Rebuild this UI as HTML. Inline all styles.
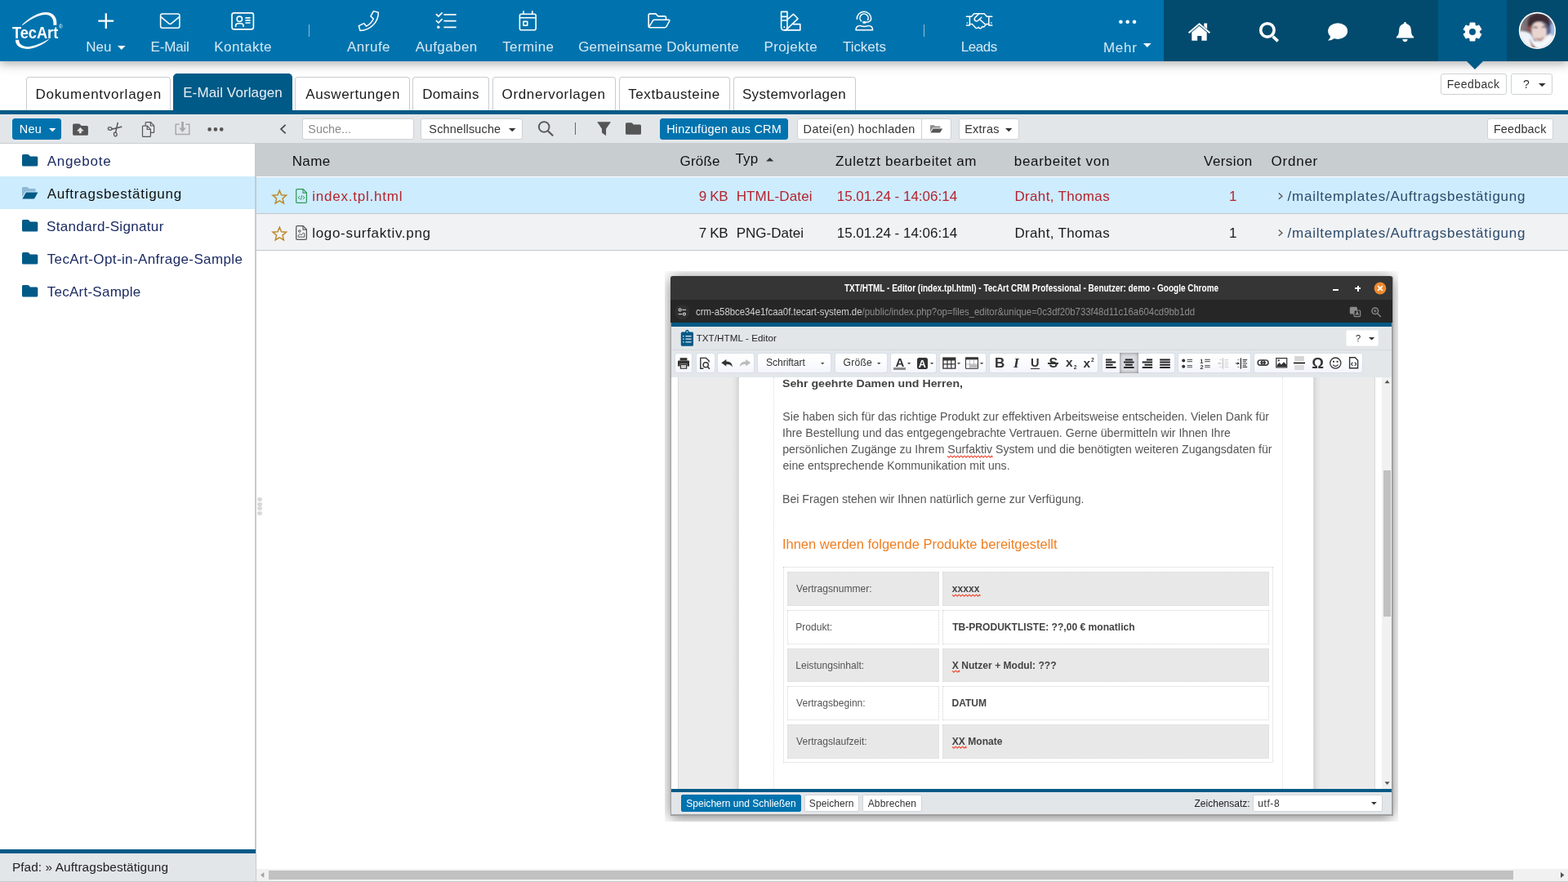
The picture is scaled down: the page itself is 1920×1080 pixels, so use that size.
<!DOCTYPE html>
<html lang="de">
<head>
<meta charset="utf-8">
<title>TecArt CRM - E-Mail Vorlagen</title>
<style>

html,body{margin:0;padding:0}
body{width:1920px;height:1080px;position:relative;overflow:hidden;background:#fff;font-family:"Liberation Sans",sans-serif;color:#222}
div,span,svg,a,b,i,u,h1,h2,h3,p,label,nav,header,section,aside,footer,main{position:absolute;display:block;box-sizing:border-box;margin:0;padding:0}
#app{position:absolute;left:0;top:0;width:1920px;height:1080px;will-change:transform}
.t{white-space:pre;line-height:1;transform-origin:0 50%}
button{border:0;background:none;font:inherit}
.i{overflow:visible}
.nav{left:0;top:0;width:1920px;height:75px;background:#0073ae;box-shadow:0 1px 13px 1px rgba(0,0,0,.37)}
.navr{left:1425px;top:0;width:495px;height:75px;background:#024b6e}
.nava{left:1761px;top:0;width:84px;height:75px;background:#005a87}
.navarrow{left:1795.5px;top:75px;width:0;height:0;border-left:10px solid transparent;border-right:10px solid transparent;border-top:10px solid #005a87}
.sep{background:rgba(255,255,255,.55);width:1px;height:15px;top:30px}
.tab{top:94px;height:42px;background:#fff;border:1px solid #c9cdd0;border-bottom:0;border-radius:4px 4px 0 0}
.tab.on{top:90px;height:46px;background:#005a87;border-color:#005a87;border-radius:5px 5px 0 0}
.tabline{left:0;top:135px;width:1920px;height:5px;background:#005a87}
.bar{left:0;top:140px;width:1920px;height:36px;background:#e2e6e9;border-bottom:1px solid #c9cdd0}
.btn{background:#fff;border:1px solid #ced2d5;border-radius:3px}
.btn.pri{background:#0073ae;border-color:#0073ae}
.tree{left:0;top:176px;width:312px;height:864px;background:#fff}
.trow{left:0;width:312px;height:40px}
.trow.on{background:#cdecfd}
.split{left:312px;top:176px;width:2px;height:904px;background:#c5cacd}
.thead{left:314px;top:176px;width:1606px;height:40px;background:#c8cdd0}
.r1{left:314px;top:217px;width:1606px;height:44px;background:#cdecfd;border-bottom:0}
.rl{left:314px;width:1606px;height:1px;background:#c3c7ca}
.r2{left:314px;top:262px;width:1606px;height:44px;background:#f1f2f4}
.path{left:0;top:1040px;width:313px;height:40px;background:#e2e6e9;border-top:5px solid #005a87}
.bl{left:0;top:1078.6px;width:1920px;height:1.4px;background:#c5cacd}
.hs{left:314px;top:1064.4px;width:1606px;height:14.4px;background:#f1f1f1}
.hst{left:329px;top:1066.2px;width:1523.8px;height:10.6px;background:#c1c1c1}

.ed{left:0;top:0;width:1920px;height:1080px}
.wclip{left:813.7px;top:332px;width:898.3px;height:674px;overflow:hidden}
.wsh{left:7.3px;top:6px;width:884.5px;height:661px;border-radius:3px 3px 0 0;box-shadow:0 2px 17px rgba(0,0,0,.52)}
.win{left:821px;top:338px;width:884.5px;height:661px;background:#a0a0a0;border-radius:3px 3px 0 0}
.wc{left:822.1px;top:395px;width:881.7px;height:602.3px;background:#fff}
.wt{left:821px;top:338px;width:883.9px;height:29px;background:#353535;border-radius:3px 3px 0 0}
.wu{left:821px;top:367px;width:883.9px;height:28.4px;background:#262626}
.wl{left:822.1px;width:881.7px;background:#005a87}
.wh{left:822.1px;top:400.2px;width:881.7px;height:28.6px;background:#e2e6e9;border-bottom:1px solid #d6dadd}
.wb{left:822.1px;top:428.8px;width:881.7px;height:33px;background:#e3e7ea}
.wf{left:822.1px;top:969.8px;width:881.7px;height:27.5px;background:#e2e6e9}
.g{top:432px;height:25px;border:1px solid #d9dfea;border-radius:3px;background:linear-gradient(#fff,#fdfdff 40%,#f3f6fc)}
.ga{left:1371px;top:432px;width:23px;height:25px;background:#d9dce1;box-shadow:inset 0 0 4px rgba(0,0,0,.45)}
.gl{left:830.3px;top:461.8px;width:75.1px;height:504px;background:linear-gradient(90deg,#ebebeb,#ebebeb 88%,#e4e4e4 95%,#d4d4d4);border-left:1px dotted #dadada;border-right:1px dotted #d2d2d2}
.gr{left:1608.4px;top:461.8px;width:75.6px;height:504px;background:linear-gradient(270deg,#ebebeb,#ebebeb 88%,#e4e4e4 95%,#d4d4d4);border-left:1px dotted #d2d2d2;border-right:1px dotted #dadada}
.dv{top:461.8px;width:0;height:504px;border-left:1px dotted #dcdcdc}
.sb{left:1692.4px;top:461.8px;width:11.4px;height:504px;background:#f1f1f1}
.st{left:1694.2px;top:576.2px;width:8.8px;height:178.8px;background:#c1c1c1}
.tb{left:958.8px;top:694.4px;width:600.2px;height:239.4px;border:1px dotted #d2d2d2}
.c{height:41.8px;border:1px dotted #d4d4d4}
.c.s{background:#e8e8e8;border-color:#dcdcdc}
.fb{top:973.4px;height:20.6px;background:#fff;border:1px solid #d2d6d9;border-radius:2px}
.fb.pri{background:#0073ae;border-color:#0073ae}

</style>
</head>
<body>
<main id="app">
<header class="nav">
<div class="navr"></div><div class="nava"></div>
<svg class="i" style="left:12px;top:10px" width="68" height="54" viewBox="12 10 68 54"><path fill="#fff" d="M26.9 30.6C34.5 22.5 47 15.2 56 15.1C64.5 15 70.3 20.6 69.3 30.8L65.4 30.8C66.3 22.6 62.3 17.8 55.4 17.9C47.6 18 36.5 23.6 27.6 31.1Z"/><path fill="#fff" d="M60 48.2C52.6 55 41.5 60 33 59.9C24.6 59.8 18.6 55.6 19 48.8L23.2 48.8C23 53.9 27.4 57.2 33.8 57.2C41.4 57.1 51 53 59.7 47.8Z"/><text x="72.1" y="35.2" font-family="Liberation Sans, sans-serif" font-size="6.4" fill="#fff" opacity=".92">®</text><text x="15" y="46.6" font-family="Liberation Sans, sans-serif" font-weight="700" font-size="20.6" fill="#fff" textLength="56.2" lengthAdjust="spacingAndGlyphs">TecArt</text></svg>
<a class="t" style="left:105.16px;top:49px;font-size:17px;color:rgba(255,255,255,.84);letter-spacing:0.104px">Neu</a>
<svg class="i" style="left:118px;top:14px" width="24" height="24" viewBox="118 14 24 24"><path d="M120.3 25.6H139.1M129.8 16.2V35" stroke="#fff" stroke-width="2.3" fill="none"/></svg>
<a class="t" style="left:184.61px;top:49px;font-size:17px;color:rgba(255,255,255,.84);letter-spacing:-0.189px">E-Mail</a>
<svg class="i" style="left:194px;top:14px" width="29" height="24" viewBox="194 14 29 24"><g fill="none" stroke="#fff" stroke-linecap="round" stroke-linejoin="round" stroke-width="1.55"><rect x="196.6" y="16.9" width="23.3" height="17.4" rx="2.2"/><path d="M197 20.6L206.9 28.9Q208.3 30 209.7 28.9L219.6 20.6"/></g></svg>
<a class="t" style="left:262.16px;top:49px;font-size:17px;color:rgba(255,255,255,.84);letter-spacing:0.469px">Kontakte</a>
<svg class="i" style="left:281px;top:13px" width="33" height="26" viewBox="281 13 33 26"><g fill="none" stroke="#fff" stroke-linecap="round" stroke-linejoin="round" stroke-width="1.65"><rect x="284" y="15.8" width="26.4" height="20.1" rx="2.6"/><circle cx="293.3" cy="23.3" r="3.2" stroke-width="1.6"/><path d="M288.6 32.4V31.6Q288.6 28.7 291.5 28.7H295.1Q298 28.7 298 31.6V32.4" stroke-width="1.6"/><path d="M300.4 21.9H306.6M300.4 24.9H306.6M300.4 28H306.6" stroke-width="1.6" stroke-linecap="butt"/></g></svg>
<a class="t" style="left:425px;top:49px;font-size:17px;color:rgba(255,255,255,.84);letter-spacing:0.497px">Anrufe</a>
<svg class="i" style="left:437px;top:11px" width="29" height="29" viewBox="437 11 29 29"><path fill="none" stroke="#fff" stroke-linecap="round" stroke-linejoin="round" stroke-width="1.5" d="M457.4 13.6L463.3 15.2C463.4 27.2 453.2 37.3 441 37.5L439.3 31.7L445.6 28.6L448.5 32.1C452.5 30 455.6 26.9 457.3 23L453.9 19.9Z"/></svg>
<a class="t" style="left:508.63px;top:49px;font-size:17px;color:rgba(255,255,255,.84);letter-spacing:0.407px">Aufgaben</a>
<svg class="i" style="left:532px;top:13px" width="29" height="24" viewBox="532 13 29 24"><g fill="none" stroke="#fff" stroke-linecap="round" stroke-linejoin="round" stroke-width="1.7"><path d="M534.4 17.6L536.9 20.1L541.1 15.8M534.4 25.5L536.9 28L541.1 23.7"/><path d="M543.4 17.8H558.6M543.4 25.7H558.6M543.4 33.3H558.6" stroke-linecap="butt"/></g><circle cx="536.8" cy="33.3" r="1.7" fill="#fff"/></svg>
<a class="t" style="left:615.22px;top:49px;font-size:17px;color:rgba(255,255,255,.84);letter-spacing:0.395px">Termine</a>
<svg class="i" style="left:633px;top:11px" width="27" height="29" viewBox="633 11 27 29"><g fill="none" stroke="#fff" stroke-linecap="round" stroke-linejoin="round" stroke-width="1.6"><rect x="636.4" y="17.2" width="19.8" height="19.6" rx="2"/><path d="M641 13.2V17M651.8 13.2V17M636.6 21.8H656" stroke-linecap="butt"/><rect x="640.9" y="26.4" width="4.9" height="4.7" rx=".4"/></g></svg>
<a class="t" style="left:708.14px;top:49px;font-size:17px;color:rgba(255,255,255,.84);letter-spacing:0.206px">Gemeinsame Dokumente</a>
<svg class="i" style="left:791px;top:15px" width="32" height="22" viewBox="791 15 32 22"><path fill="none" stroke="#fff" stroke-linecap="round" stroke-linejoin="round" stroke-width="1.6" d="M815.5 24.3V21.6Q815.5 19.9 813.8 19.9H805.9L802.9 16.9H795.9Q794.2 16.9 794.2 18.6V32M794.6 33.2L799.4 25.4Q800.1 24.3 801.4 24.3H818.6Q820.5 24.3 819.6 26L816 32.6Q815.3 33.7 814 33.7H796Q794.2 33.7 794.2 32"/></svg>
<a class="t" style="left:935.41px;top:49px;font-size:17px;color:rgba(255,255,255,.84);letter-spacing:0.407px">Projekte</a>
<svg class="i" style="left:945px;top:11px" width="38" height="29" viewBox="945 11 38 29"><g fill="none" stroke="#fff" stroke-linecap="round" stroke-linejoin="round" stroke-width="1.6"><path d="M956.6 14.4H964V33.2Q964 37 960.3 37Q956.6 37 956.6 33.2Z"/><path d="M956.8 20.4H963.8M956.8 25H963.8" stroke-linecap="butt"/><path d="M964.4 23.6L971.5 17.3L977 22.8L962.6 36.6"/><path d="M971.2 29.6H979.8V36.9H960.6"/></g><circle cx="960.4" cy="33.3" r="1" fill="#fff"/></svg>
<a class="t" style="left:1031.96px;top:49px;font-size:17px;color:rgba(255,255,255,.84);letter-spacing:-0.038px">Tickets</a>
<svg class="i" style="left:1045px;top:11px" width="27" height="29" viewBox="1045 11 27 29"><g fill="none" stroke="#fff" stroke-linecap="round" stroke-linejoin="round" stroke-width="1.5"><path d="M1049.3 23.2A8.7 8.7 0 1 1 1066.7 22.8Q1066.6 27.2 1060.4 27.2"/><path d="M1054.6 25.8A5.1 5.1 0 1 1 1062.6 24.4"/><path d="M1048 36.8Q1048 31.4 1053.2 31.4Q1056 32.6 1058.3 32.6Q1060.6 32.6 1063.4 31.4Q1068.6 31.4 1068.6 36.8Z"/></g><rect x="1056.2" y="26" width="4.4" height="2.7" rx="1.3" fill="#fff"/></svg>
<a class="t" style="left:1176.65px;top:49px;font-size:17px;color:rgba(255,255,255,.84);letter-spacing:-0.438px">Leads</a>
<svg class="i" style="left:1181px;top:14px" width="36" height="23" viewBox="1181 14 36 23"><g fill="none" stroke="#fff" stroke-linecap="round" stroke-linejoin="round" stroke-width="1.5" stroke-linecap="butt"><path d="M1183.4 20.2H1189.6L1192.7 16.8H1205.2L1208.4 20.2H1214.8"/><path d="M1187.4 20.2V31M1210.8 20.2V31M1183.4 31H1187.4M1210.8 31H1214.8"/><path d="M1187.6 29.6H1190.4L1194.6 34.1Q1196.2 35.2 1197.6 33.8L1198.2 33.2L1199.4 34.6Q1200.8 35.2 1201.8 34L1203 32.4L1204.4 33Q1205.8 32.6 1206.4 31L1207.6 29.4H1210.6"/><path d="M1198.4 17.2L1193.8 21.6Q1192.4 23.4 1194 25.2Q1195.8 26.6 1197.6 25.2L1201.8 21.2M1200.2 24.2L1206.4 29.8"/></g><rect x="1183.6" y="27.2" width="1.5" height="1.6" fill="#fff" opacity=".85"/><rect x="1213.1" y="27.2" width="1.5" height="1.6" fill="#fff" opacity=".85"/></svg>
<a class="t" style="left:1350.9px;top:50px;font-size:17px;color:rgba(255,255,255,.84);letter-spacing:0.741px">Mehr</a>
<svg class="i" style="left:1368px;top:23px" width="26" height="8" viewBox="1368 23 26 8"><circle cx="1372.4" cy="26.7" r="2.3" fill="#fff"/><circle cx="1380.7" cy="26.7" r="2.3" fill="#fff"/><circle cx="1389" cy="26.7" r="2.3" fill="#fff"/></svg>
<div class="sep" style="left:378px"></div><div class="sep" style="left:1130.5px"></div>
<svg class="i" style="left:144.2px;top:55.6px" width="9.6" height="5" viewBox="0 0 10 5"><path d="M0 0H10L5 5Z" fill="#fff"/></svg>
<svg class="i" style="left:1400.2px;top:53.3px" width="9.6" height="5" viewBox="0 0 10 5"><path d="M0 0H10L5 5Z" fill="#fff"/></svg>
<svg class="i" style="left:1453px;top:26px" width="32" height="26" viewBox="1453 26 32 26"><path fill="#fff" d="M1468.5 31.7L1459.3 39.6V49.8H1466.2V44H1471.4V49.8H1477.7V39.6Z"/><path fill="none" stroke="#fff" stroke-width="2.1" d="M1455.6 40.2L1468.5 29.3L1481.4 40.2"/><path fill="#fff" d="M1474.3 28.6H1478.1V35.4L1474.3 32.2Z"/></svg>
<svg class="i" style="left:1540px;top:25px" width="28" height="28" viewBox="1540 25 28 28"><circle cx="1551.9" cy="36.9" r="8.2" fill="none" stroke="#fff" stroke-width="3.6"/><path d="M1558.6 44.6L1564.8 50.4" stroke="#fff" stroke-width="3.6" fill="none"/></svg>
<svg class="i" style="left:1624px;top:27px" width="28" height="25" viewBox="1624 27 28 25"><ellipse cx="1638.1" cy="38.1" rx="12" ry="9.9" fill="#fff"/><path fill="#fff" d="M1629.4 43.6Q1629 47.4 1626 49.8Q1630.6 49.7 1634.4 46.8Z"/></svg>
<svg class="i" style="left:1708px;top:25px" width="25" height="28" viewBox="1708 25 25 28"><path fill="#fff" d="M1720.5 26.9Q1722.2 26.9 1722.2 28.9Q1728 30.6 1728 37.4Q1728 42.4 1730.6 44.6Q1731.6 45.6 1731.1 46.6H1709.9Q1709.4 45.6 1710.4 44.6Q1713 42.4 1713 37.4Q1713 30.6 1718.8 28.9Q1718.8 26.9 1720.5 26.9Z"/><path fill="#fff" d="M1717.4 48.1H1723.6Q1723.4 51.2 1720.5 51.2Q1717.6 51.2 1717.4 48.1Z"/></svg>
<svg class="i" style="left:1789px;top:25px" width="28" height="28" viewBox="1789 25 28 28"><path fill="#fff" stroke="#fff" stroke-width="1.5" stroke-linejoin="round" d="M1800.0 31.3L1800.3 28.3L1805.7 28.3L1806.0 31.3L1808.2 32.5L1810.9 31.3L1813.6 36.0L1811.2 37.7L1811.2 40.3L1813.6 42.0L1810.9 46.7L1808.2 45.5L1806.0 46.7L1805.7 49.7L1800.3 49.7L1800.0 46.7L1797.8 45.5L1795.1 46.7L1792.4 42.0L1794.8 40.3L1794.8 37.7L1792.4 36.0L1795.1 31.3L1797.8 32.5Z"/><circle cx="1803.0" cy="39.0" r="4" fill="#005a87"/></svg>
<svg class="i" style="left:1859px;top:14px" width="47" height="47" viewBox="1859 14 47 47"><defs><clipPath id="av"><circle cx="1882.4" cy="37.4" r="20.9"/></clipPath><filter id="avf" x="-20%" y="-20%" width="140%" height="140%"><feGaussianBlur stdDeviation="1.1"/></filter><linearGradient id="avb" x1="0" y1="0" x2="1" y2="0"><stop offset="0" stop-color="#8b8b90"/><stop offset=".35" stop-color="#6a5a62"/><stop offset=".75" stop-color="#5c5f86"/><stop offset="1" stop-color="#8fb0dc"/></linearGradient></defs><circle cx="1882.4" cy="37.4" r="22.6" fill="#fff"/><g clip-path="url(#av)"><rect x="1858" y="13" width="50" height="50" fill="url(#avb)"/><g filter="url(#avf)"><path d="M1856 39Q1866 36 1874 41L1886 62H1856Z" fill="#eef4fb"/><path d="M1908 40Q1899 39 1892 45L1880 62H1908Z" fill="#f3f6fb"/><ellipse cx="1884" cy="58" rx="16" ry="8" fill="#f4f7fb"/><path d="M1899 30L1906 28V42L1899 44Z" fill="#9dbbe4"/><ellipse cx="1884.6" cy="38.6" rx="9.4" ry="12.4" fill="#ead6d0" transform="rotate(-8 1884.6 38.6)"/><path d="M1871.5 34Q1868.5 20 1881 17Q1895 15 1897.5 27Q1898 31 1896.5 34Q1894 26 1887 26.5Q1879 26 1875.5 31Z" fill="#3b2a30"/><path d="M1871.6 31Q1870 36 1873 40L1874.4 33Z" fill="#c0392b" opacity=".7"/><path d="M1877.4 34.2Q1880 32.4 1882.6 34.4M1888 33.6Q1890.6 32 1893 33.6" stroke="#5a4048" stroke-width="1.5" fill="none"/><path d="M1880.6 45.4Q1885 49.6 1890.6 44.6Q1889 50.4 1884.6 50.6Q1881.6 49.6 1880.6 45.4Z" fill="#b58b88"/><path d="M1873.4 47Q1876 57 1884 60L1879 61Q1873.6 55 1873.4 47Z" fill="#7a2c24"/></g></g></svg>
</header>
<div class="navarrow"></div>
<nav>
<div class="tab" style="left:32px;width:177px"></div>
<a class="t" style="left:43.43px;top:107px;font-size:17px;color:#1b1b1b;letter-spacing:0.736px">Dokumentvorlagen</a>
<div class="tab on" style="left:212px;width:146px"></div>
<a class="t" style="left:224.16px;top:105px;font-size:17px;color:rgba(255,255,255,.9);letter-spacing:0.116px">E-Mail Vorlagen</a>
<div class="tab" style="left:361px;width:141px"></div>
<a class="t" style="left:374.28px;top:107px;font-size:17px;color:#1b1b1b;letter-spacing:0.581px">Auswertungen</a>
<div class="tab" style="left:505px;width:94px"></div>
<a class="t" style="left:517.16px;top:107px;font-size:17px;color:#1b1b1b;letter-spacing:0.368px">Domains</a>
<div class="tab" style="left:602.5px;width:151.5px"></div>
<a class="t" style="left:614.52px;top:107px;font-size:17px;color:#1b1b1b;letter-spacing:0.649px">Ordnervorlagen</a>
<div class="tab" style="left:757.5px;width:136.5px"></div>
<a class="t" style="left:769.23px;top:107px;font-size:17px;color:#1b1b1b;letter-spacing:0.599px">Textbausteine</a>
<div class="tab" style="left:897.5px;width:150.5px"></div>
<a class="t" style="left:908.88px;top:107px;font-size:17px;color:#1b1b1b;letter-spacing:0.379px">Systemvorlagen</a>
</nav>
<div class="btn" style="left:1763.5px;top:90.4px;width:81.2px;height:25.4px;"></div>
<a class="t" style="left:1771.66px;top:96px;font-size:14px;color:#333;letter-spacing:0.405px">Feedback</a>
<div class="btn" style="left:1849.5px;top:90.4px;width:51.2px;height:25.4px;"></div>
<span class="t" style="left:1864.91px;top:96px;font-size:14px;color:#333">?</span>
<svg class="i" style="left:1884.2px;top:102.4px" width="8.6" height="4.4" viewBox="0 0 10 5"><path d="M0 0H10L5 5Z" fill="#333"/></svg>
<div class="tabline"></div>
<section class="bar"></section>
<div class="btn pri" style="left:15px;top:145px;width:60px;height:26px;"></div>
<a class="t" style="left:23.64px;top:151px;font-size:14.4px;color:#fff;letter-spacing:0.398px">Neu</a>
<svg class="i" style="left:59.8px;top:157.4px" width="8.4" height="4.3" viewBox="0 0 10 5"><path d="M0 0H10L5 5Z" fill="#fff"/></svg>
<svg class="i" style="left:88px;top:150px" width="21" height="17" viewBox="88 150 21 17"><path fill="#555" d="M90.6 151.4H96.4Q97.2 151.4 97.8 152L99.6 153.9H106.4Q107.9 153.9 107.9 155.4V164.3Q107.9 165.8 106.4 165.8H90.6Q89.1 165.8 89.1 164.3V152.9Q89.1 151.4 90.6 151.4Z"/><path fill="#e2e6e9" d="M98.3 156L102.7 160.6H99.8V163.2H96.8V160.6H93.9Z"/></svg>
<svg class="i" style="left:130px;top:149px" width="21" height="19" viewBox="130 149 21 19"><g fill="none" stroke="#555" stroke-width="1.3" stroke-linecap="round"><ellipse cx="134.7" cy="157.5" rx="2.4" ry="1.8" transform="rotate(15 134.7 157.5)"/><ellipse cx="141.3" cy="164.5" rx="1.8" ry="2.4" transform="rotate(-10 141.3 164.5)"/><path d="M137 158.2L148.8 155.2M141.6 162.2L144.2 150.4" stroke-width="1.5"/></g></svg>
<svg class="i" style="left:173px;top:148px" width="17" height="21" viewBox="173 148 17 21"><g fill="none" stroke="#555" stroke-width="1.2" stroke-linejoin="round"><path d="M178.2 153.6V150.6Q178.2 149.7 179.1 149.7H184.6L188.6 153.8V161.4Q188.6 162.3 187.7 162.3H184.8"/><path d="M184.4 149.9V154H188.4"/><path d="M175.4 154.2H180.4L184.4 158.3V166.4Q184.4 167.3 183.5 167.3H175.4Q174.5 167.3 174.5 166.4V155.1Q174.5 154.2 175.4 154.2Z"/><path d="M180.2 154.4V158.5H184.2"/></g></svg>
<svg class="i" style="left:213px;top:148px" width="21" height="19" viewBox="213 148 21 19"><path fill="none" stroke="#a9a9a9" stroke-width="1.5" d="M219.6 152.2H215.2V164.6H231.8V152.2H227.4"/><path fill="#a9a9a9" d="M222.1 149H224.9V156.6H227.8L223.5 162L219.2 156.6H222.1Z"/></svg>
<svg class="i" style="left:253px;top:155px" width="22" height="7" viewBox="253 155 22 7"><circle cx="256.6" cy="158.4" r="2.3" fill="#555"/><circle cx="263.9" cy="158.4" r="2.3" fill="#555"/><circle cx="271.2" cy="158.4" r="2.3" fill="#555"/></svg>
<svg class="i" style="left:342px;top:151px" width="10" height="14" viewBox="342 151 10 14"><path d="M349.6 152.8L344 158.1L349.6 163.4" fill="none" stroke="#444" stroke-width="1.6"/></svg>
<svg class="i" style="left:657px;top:147px" width="23" height="21" viewBox="657 147 23 21"><circle cx="666.2" cy="155.4" r="6.3" fill="none" stroke="#555" stroke-width="1.9"/><path d="M670.8 160.2L677.2 166.2" stroke="#555" stroke-width="2.1" fill="none"/></svg>
<div style="left:703.8px;top:149.8px;width:1.2px;height:15.3px;background:#5e696f"></div>
<svg class="i" style="left:730px;top:148px" width="19" height="19" viewBox="730 148 19 19"><path fill="#555" d="M731.2 149.2H748L742.1 157.8V166.2L737 162.6V157.8Z"/></svg>
<svg class="i" style="left:765px;top:149px" width="21" height="17" viewBox="765 149 21 17"><path fill="#555" d="M767.6 150.2H772.8Q773.6 150.2 774.2 150.8L775.8 152.5H783.4Q785 152.5 785 154.1V163.2Q785 164.8 783.4 164.8H767.6Q766 164.8 766 163.2V151.8Q766 150.2 767.6 150.2Z"/></svg>
<div class="btn" style="left:369.5px;top:145px;width:137px;height:26px;"></div>
<span class="t" style="left:377.37px;top:151px;font-size:14.4px;color:#8a8a8a;letter-spacing:-0.040px">Suche...</span>
<div class="btn" style="left:514.5px;top:145px;width:125px;height:26px;"></div>
<span class="t" style="left:525.37px;top:151px;font-size:14.4px;color:#333;letter-spacing:0.195px">Schnellsuche</span>
<svg class="i" style="left:623.2px;top:157.2px" width="8.4" height="4.3" viewBox="0 0 10 5"><path d="M0 0H10L5 5Z" fill="#333"/></svg>
<div class="btn pri" style="left:808px;top:145px;width:157px;height:26px;"></div>
<a class="t" style="left:816.23px;top:151px;font-size:14.4px;color:#fff;letter-spacing:0.213px">Hinzufügen aus CRM</a>
<div class="btn" style="left:975.5px;top:145px;width:153.5px;height:26px;border-radius:3px 0 0 3px"></div>
<a class="t" style="left:983.6px;top:151px;font-size:14.4px;color:#333;letter-spacing:0.399px">Datei(en) hochladen</a>
<div class="btn" style="left:1128px;top:145px;width:36.8px;height:26px;border-radius:0 3px 3px 0"></div>
<svg class="i" style="left:1138px;top:152px" width="17" height="12" viewBox="1138 152 17 12"><path fill="#8d8d8d" d="M1139.6 153.2H1143.6L1145 154.6H1150.6Q1151.4 154.6 1151.4 155.4V156.6H1142.2L1139 161.6V153.8Q1139 153.2 1139.6 153.2Z"/><path fill="#555" d="M1142.6 157.4H1154.2L1151 162.6H1139.4Z"/></svg>
<div class="btn" style="left:1173.6px;top:145px;width:74px;height:26px;"></div>
<a class="t" style="left:1181.23px;top:151px;font-size:14.4px;color:#333;letter-spacing:0.282px">Extras</a>
<svg class="i" style="left:1231.4px;top:157.2px" width="8.4" height="4.3" viewBox="0 0 10 5"><path d="M0 0H10L5 5Z" fill="#333"/></svg>
<div class="btn" style="left:1820.5px;top:145px;width:81px;height:26px;"></div>
<a class="t" style="left:1828.88px;top:151px;font-size:14.4px;color:#333;letter-spacing:0.180px">Feedback</a>
<aside class="tree">
<div class="trow" style="top:0px"></div>
<a class="t" style="left:57.63px;top:13px;font-size:17px;color:#1c2b63;letter-spacing:0.743px">Angebote</a>
<svg class="i" style="left:26.9px;top:13.4px" width="19.4" height="14.6" viewBox="0 0 19.4 14.6"><path fill="#005a87" d="M1.6 0H6.9Q7.7 0 8.3 0.6L9.9 2.4H17.7Q19.3 2.4 19.3 4V13Q19.3 14.6 17.7 14.6H1.6Q0 14.6 0 13V1.6Q0 0 1.6 0Z"/></svg>
<div class="trow on" style="top:40px"></div>
<a class="t" style="left:57.63px;top:53px;font-size:17px;color:#111;letter-spacing:0.743px">Auftragsbestätigung</a>
<svg class="i" style="left:26.9px;top:53.4px" width="19.4" height="14.6" viewBox="0 0 19.4 14.6"><path fill="#8db8d7" d="M1.3 0H6.6L8.4 2H15.4Q16.6 2 16.6 3.2V5.4H4.2L0 12.4V1.3Q0 0 1.3 0Z"/><path fill="#005a87" d="M4.8 6.4H19.4L15.6 13.6Q15.2 14.6 14 14.6H0.4Z"/></svg>
<div class="trow" style="top:80px"></div>
<a class="t" style="left:57.07px;top:93px;font-size:17px;color:#1c2b63;letter-spacing:0.330px">Standard-Signatur</a>
<svg class="i" style="left:26.9px;top:93.4px" width="19.4" height="14.6" viewBox="0 0 19.4 14.6"><path fill="#005a87" d="M1.6 0H6.9Q7.7 0 8.3 0.6L9.9 2.4H17.7Q19.3 2.4 19.3 4V13Q19.3 14.6 17.7 14.6H1.6Q0 14.6 0 13V1.6Q0 0 1.6 0Z"/></svg>
<div class="trow" style="top:120px"></div>
<a class="t" style="left:57.72px;top:133px;font-size:17px;color:#1c2b63;letter-spacing:0.394px">TecArt-Opt-in-Anfrage-Sample</a>
<svg class="i" style="left:26.9px;top:133.4px" width="19.4" height="14.6" viewBox="0 0 19.4 14.6"><path fill="#005a87" d="M1.6 0H6.9Q7.7 0 8.3 0.6L9.9 2.4H17.7Q19.3 2.4 19.3 4V13Q19.3 14.6 17.7 14.6H1.6Q0 14.6 0 13V1.6Q0 0 1.6 0Z"/></svg>
<div class="trow" style="top:160px"></div>
<a class="t" style="left:57.72px;top:173px;font-size:17px;color:#1c2b63;letter-spacing:0.257px">TecArt-Sample</a>
<svg class="i" style="left:26.9px;top:173.4px" width="19.4" height="14.6" viewBox="0 0 19.4 14.6"><path fill="#005a87" d="M1.6 0H6.9Q7.7 0 8.3 0.6L9.9 2.4H17.7Q19.3 2.4 19.3 4V13Q19.3 14.6 17.7 14.6H1.6Q0 14.6 0 13V1.6Q0 0 1.6 0Z"/></svg>
</aside>
<div class="split"></div>
<div style="left:315.4px;top:609.4px;width:5.2px;height:5px;border-radius:50%;background:#d9d9d9"></div>
<div style="left:315.4px;top:614.7px;width:5.2px;height:5px;border-radius:50%;background:#d9d9d9"></div>
<div style="left:315.4px;top:620.1px;width:5.2px;height:5px;border-radius:50%;background:#d9d9d9"></div>
<div style="left:315.4px;top:625.5px;width:5.2px;height:5px;border-radius:50%;background:#d9d9d9"></div>
<footer class="path"></footer>
<span class="t" style="left:14.9px;top:1054px;font-size:15.4px;color:#222;letter-spacing:0.079px">Pfad: » Auftragsbestätigung</span>
<div class="thead"></div>
<b class="t" style="left:357.65px;top:189px;font-size:17px;color:#111;letter-spacing:0.412px;font-weight:400">Name</b>
<b class="t" style="left:832.57px;top:189px;font-size:17px;color:#111;letter-spacing:0.163px;font-weight:400">Größe</b>
<b class="t" style="left:900.49px;top:186px;font-size:17px;color:#111;letter-spacing:0.189px;font-weight:400">Typ</b>
<b class="t" style="left:1023.02px;top:189px;font-size:17px;color:#111;letter-spacing:0.640px;font-weight:400">Zuletzt bearbeitet am</b>
<b class="t" style="left:1241.86px;top:189px;font-size:17px;color:#111;letter-spacing:0.672px;font-weight:400">bearbeitet von</b>
<b class="t" style="left:1474.12px;top:189px;font-size:17px;color:#111;letter-spacing:0.396px;font-weight:400">Version</b>
<b class="t" style="left:1556.52px;top:189px;font-size:17px;color:#111;letter-spacing:0.770px;font-weight:400">Ordner</b>
<svg class="i" style="left:938px;top:193.4px" width="9.4" height="4.6" viewBox="0 0 10 5"><path d="M0 5L5 0L10 5Z" fill="#333"/></svg>
<div class="r1"></div><div class="rl" style="top:261px"></div><div class="r2"></div><div class="rl" style="top:306px"></div>
<svg class="i" style="left:333px;top:231.7px" width="18.6" height="18.6" viewBox="0 0 18.6 18.6"><path d="M9.30 1.20L11.59 6.74L17.57 7.21L13.01 11.11L14.41 16.94L9.30 13.80L4.19 16.94L5.59 11.11L1.03 7.21L7.01 6.74Z" fill="none" stroke="#bd8a2c" stroke-width="1.5" stroke-linejoin="miter"/></svg>
<svg class="i" style="left:361.9px;top:231px" width="14.1" height="18" viewBox="0 0 14.1 18"><path d="M2 0.7H9.2L13.4 4.9V16Q13.4 17.3 12.1 17.3H2Q0.7 17.3 0.7 16V2Q0.7 0.7 2 0.7Z" fill="none" stroke="#2f9a5c" stroke-width="1.25"/><path d="M9 0.9V5.1H13.2" fill="none" stroke="#2f9a5c" stroke-width="1.1"/><path d="M5.2 9L3.2 11L5.2 13M8.9 9L10.9 11L8.9 13M7.8 8.2L6.3 13.8" fill="none" stroke="#2f9a5c" stroke-width="1"/></svg>
<a class="t" style="left:382.2px;top:232px;font-size:17px;color:#b7232f;letter-spacing:0.788px">index.tpl.html</a>
<span class="t" style="left:855.74px;top:232px;font-size:17px;color:#b7232f;letter-spacing:-0.339px">9 KB</span>
<span class="t" style="left:901.65px;top:232px;font-size:17px;color:#b7232f;letter-spacing:0.145px">HTML-Datei</span>
<span class="t" style="left:1024.75px;top:232px;font-size:17px;color:#b7232f;letter-spacing:-0.006px">15.01.24 - 14:06:14</span>
<span class="t" style="left:1242.43px;top:232px;font-size:17px;color:#b7232f;letter-spacing:0.344px">Draht, Thomas</span>
<span class="t" style="left:1505.01px;top:232px;font-size:17px;color:#b7232f">1</span>
<svg class="i" style="left:1564.6px;top:235.5px" width="6" height="8.4" viewBox="0 0 6 8.4"><path d="M0.8 0.6L5 4.2L0.8 7.8" fill="none" stroke="#555" stroke-width="1.3"/></svg>
<a class="t" style="left:1576.6px;top:232px;font-size:17px;color:#2d4b6c;letter-spacing:0.769px">/mailtemplates/Auftragsbestätigung</a>
<svg class="i" style="left:333px;top:276.7px" width="18.6" height="18.6" viewBox="0 0 18.6 18.6"><path d="M9.30 1.20L11.59 6.74L17.57 7.21L13.01 11.11L14.41 16.94L9.30 13.80L4.19 16.94L5.59 11.11L1.03 7.21L7.01 6.74Z" fill="none" stroke="#bd8a2c" stroke-width="1.5" stroke-linejoin="miter"/></svg>
<svg class="i" style="left:361.9px;top:276px" width="14.1" height="18" viewBox="0 0 14.1 18"><path d="M2 0.7H9.2L13.4 4.9V16Q13.4 17.3 12.1 17.3H2Q0.7 17.3 0.7 16V2Q0.7 0.7 2 0.7Z" fill="none" stroke="#555" stroke-width="1.25"/><path d="M9 0.9V5.1H13.2" fill="none" stroke="#555" stroke-width="1.1"/><circle cx="4.8" cy="7" r="1.3" fill="none" stroke="#555" stroke-width="1"/><path d="M3.2 14.2V12.2L5.4 10.4L7 11.8L9.6 9L10.9 10.2V14.2Z" fill="none" stroke="#555" stroke-width="1"/></svg>
<a class="t" style="left:382.18px;top:277px;font-size:17px;color:#1a1a1a;letter-spacing:0.701px">logo-surfaktiv.png</a>
<span class="t" style="left:855.71px;top:277px;font-size:17px;color:#1a1a1a;letter-spacing:-0.328px">7 KB</span>
<span class="t" style="left:901.65px;top:277px;font-size:17px;color:#1a1a1a;letter-spacing:0.011px">PNG-Datei</span>
<span class="t" style="left:1024.75px;top:277px;font-size:17px;color:#1a1a1a;letter-spacing:-0.006px">15.01.24 - 14:06:14</span>
<span class="t" style="left:1242.43px;top:277px;font-size:17px;color:#1a1a1a;letter-spacing:0.344px">Draht, Thomas</span>
<span class="t" style="left:1505.01px;top:277px;font-size:17px;color:#1a1a1a">1</span>
<svg class="i" style="left:1564.6px;top:280.5px" width="6" height="8.4" viewBox="0 0 6 8.4"><path d="M0.8 0.6L5 4.2L0.8 7.8" fill="none" stroke="#555" stroke-width="1.3"/></svg>
<a class="t" style="left:1576.6px;top:277px;font-size:17px;color:#2d4b6c;letter-spacing:0.769px">/mailtemplates/Auftragsbestätigung</a>
<section class="ed">
<div class="wclip"><div class="wsh"></div></div><div class="win"></div><div class="wc"></div>
<div class="wt"></div><div class="wu"></div><div class="wl" style="top:395px;height:5.2px"></div>
<span class="t" style="left:1033.93px;top:348px;font-size:11.9px;font-weight:700;color:#fff;transform:scaleX(0.8412)">TXT/HTML - Editor (index.tpl.html) - TecArt CRM Professional - Benutzer: demo - Google Chrome</span>
<div style="left:1632.2px;top:354px;width:6.4px;height:1.7px;background:#fff"></div>
<div style="left:1659.2px;top:352.2px;width:7px;height:1.7px;background:#fff"></div><div style="left:1661.9px;top:349.6px;width:1.7px;height:7px;background:#fff"></div>
<svg class="i" style="left:1682px;top:345px" width="16" height="16" viewBox="1682 345 16 16"><circle cx="1690" cy="353" r="7.4" fill="#ef8a2c"/><path d="M1687.1 350.1L1692.9 355.9M1692.9 350.1L1687.1 355.9" stroke="#fff" stroke-width="1.7" fill="none"/></svg>
<svg class="i" style="left:825px;top:372px" width="20" height="20" viewBox="825 372 20 20"><circle cx="835.2" cy="382" r="9.2" fill="#2f2f2f"/><g fill="none" stroke="#c8c8c8" stroke-width="1.2"><circle cx="832.6" cy="379.4" r="1.5"/><path d="M835.4 379.4H840"/><circle cx="838" cy="384.6" r="1.5"/><path d="M830.6 384.6H835.4"/></g></svg>
<span class="t" style="left:851.87px;top:376px;font-size:12.4px;color:#cfcfcf;transform:scaleX(0.9177)">crm-a58bce34e1fcaa0f.tecart-system.de<span style="color:#8d8d8d;position:static;display:inline">/public/index.php?op=files_editor&amp;unique=0c3df20b733f48d11c16a604cd9bb1dd</span></span>
<svg class="i" style="left:1652px;top:375px" width="15" height="14" viewBox="1652 375 15 14"><g fill="none" stroke="#8a8a8a" stroke-width="1.2"><rect x="1653.4" y="376.4" width="8" height="7.6" rx="1" fill="#8a8a8a"/><rect x="1658" y="380" width="7.6" height="7.6" rx="1" fill="#262626"/><path d="M1660 386L1661.8 381.6L1663.6 386M1660.6 384.6H1663"/></g></svg>
<svg class="i" style="left:1678px;top:375px" width="15" height="14" viewBox="1678 375 15 14"><g fill="none" stroke="#8a8a8a" stroke-width="1.4"><circle cx="1683.8" cy="380.8" r="3.8"/><path d="M1686.6 383.8L1690.8 388"/><path d="M1682 380.8H1685.6M1683.8 379V382.6" stroke-width="1"/></g></svg>
<div class="wh"></div>
<svg class="i" style="left:833px;top:403px" width="17" height="22" viewBox="833 403 17 22"><path fill="#005a87" d="M835.3 406.4H838.9Q839.3 403.8 841.4 403.8Q843.5 403.8 843.9 406.4H847.5Q849 406.4 849 407.9V422.2Q849 423.7 847.5 423.7H835.3Q833.8 423.7 833.8 422.2V407.9Q833.8 406.4 835.3 406.4Z"/><circle cx="841.4" cy="406.3" r=".9" fill="#e2e6e9"/><g stroke="#e2e6e9" stroke-width="1.2" fill="none"><path d="M839.4 411.6H846.6M839.4 415.2H846.6M839.4 418.8H846.6"/><path d="M836 411.6H837.6M836 415.2H837.6M836 418.8H837.6"/></g></svg>
<h1 class="t" style="left:852.63px;top:408px;font-size:11.6px;color:#222;letter-spacing:0.088px;font-weight:400">TXT/HTML - Editor</h1>
<div style="left:1648px;top:404px;width:40.4px;height:20px;background:#fff;border:1px solid #f3f5f6;border-radius:2px"></div>
<span class="t" style="left:1660.06px;top:409px;font-size:11px;color:#222">?</span>
<svg class="i" style="left:1675.8px;top:413.2px" width="7.2" height="3.6" viewBox="0 0 10 5"><path d="M0 0H10L5 5Z" fill="#333"/></svg>
<div class="wb"></div>
<div class="g" style="left:826px;width:22px"></div>
<div class="g" style="left:852px;width:24px"></div>
<div class="g" style="left:878px;width:46px"></div>
<div class="g" style="left:927px;width:91px"></div>
<div class="g" style="left:1022px;width:65px"></div>
<div class="g" style="left:1090px;width:57px"></div>
<div class="g" style="left:1150px;width:58px"></div>
<div class="g" style="left:1211px;width:134px"></div>
<div class="g" style="left:1349px;width:90px"></div>
<div class="g" style="left:1442px;width:90px"></div>
<div class="g" style="left:1535px;width:134px"></div>
<div class="ga"></div>
<svg class="i" style="left:829px;top:437px" width="16" height="16" viewBox="829 437 16 16"><path fill="#333" d="M832.6 438.2H841.4V441.4H832.6Z"/><path fill="#333" d="M831 441.6H843Q844 441.6 844 442.6V448.6H841.4V445.6H832.6V448.6H830V442.6Q830 441.6 831 441.6Z"/><path fill="none" stroke="#333" stroke-width="1.3" d="M833.4 446.4H840.6V451.2H833.4Z"/><path d="M834.4 448.2H839.6" stroke="#888" stroke-width="1" fill="none"/></svg>
<svg class="i" style="left:856px;top:436px" width="15" height="17" viewBox="856 436 15 17"><path fill="none" stroke="#333" stroke-width="1.4" d="M861.4 451.2H857.8V438.4H864.6L868.2 442V443.6"/><circle cx="864.2" cy="446.8" r="3.1" fill="none" stroke="#333" stroke-width="1.4"/><path d="M866.4 449.2L869 451.8" stroke="#333" stroke-width="1.6" fill="none"/></svg>
<svg class="i" style="left:882px;top:439px" width="16" height="12" viewBox="882 439 16 12"><path fill="#333" d="M883.3 444.2L889.4 440V442.6Q896.6 442.8 897 449.4Q894.6 445.8 889.4 446V448.6Z"/></svg>
<svg class="i" style="left:905px;top:439px" width="16" height="12" viewBox="905 439 16 12"><path fill="#bdbdbd" d="M919.3 444.2L913.2 440V442.6Q906 442.8 905.6 449.4Q908 445.8 913.2 446V448.6Z"/></svg>
<span class="t" style="left:1096.39px;top:436px;font-size:15px;font-weight:700;color:#333">A</span>
<div style="left:1094.2px;top:450.4px;width:14.8px;height:2.2px;background:#8a8a8a"></div>
<svg class="i" style="left:1111.3px;top:443.9px" width="4.2" height="2.2" viewBox="0 0 10 5"><path d="M0 0H10L5 5Z" fill="#444"/></svg>
<div style="left:1122.5px;top:437.6px;width:13.8px;height:14.2px;background:#333;border-radius:2.5px"></div>
<span class="t" style="left:1124.74px;top:440px;font-size:12.6px;font-weight:700;color:#fff">A</span>
<svg class="i" style="left:1138.9px;top:443.9px" width="4.2" height="2.2" viewBox="0 0 10 5"><path d="M0 0H10L5 5Z" fill="#444"/></svg>
<svg class="i" style="left:1154px;top:437px" width="17" height="15" viewBox="1154 437 17 15"><path fill="#333" fill-rule="evenodd" d="M1154.2 437.6H1170.4V451.8H1154.2ZM1155.6 441.6V445.2H1159.4V441.6ZM1160.6 441.6V445.2H1164.2V441.6ZM1165.4 441.6V445.2H1169V441.6ZM1155.6 446.6V450.4H1159.4V446.6ZM1160.6 446.6V450.4H1164.2V446.6ZM1165.4 446.6V450.4H1169V446.6Z"/></svg>
<svg class="i" style="left:1172.2px;top:443.9px" width="4.2" height="2.2" viewBox="0 0 10 5"><path d="M0 0H10L5 5Z" fill="#444"/></svg>
<svg class="i" style="left:1182px;top:437px" width="17" height="15" viewBox="1182 437 17 15"><path fill="#333" d="M1182 437.6H1198V440.4H1182Z"/><path fill="none" stroke="#333" stroke-width="1" d="M1182.5 438H1197.5V451.3H1182.5Z"/><path fill="#bbb" d="M1187.6 446.4H1197V450.8H1187.6Z"/><path d="M1183 446H1197M1187.4 441V451M1192.4 441V446" stroke="#aaa" stroke-width=".8" fill="none"/></svg>
<svg class="i" style="left:1199.9px;top:443.9px" width="4.2" height="2.2" viewBox="0 0 10 5"><path d="M0 0H10L5 5Z" fill="#444"/></svg>
<span class="t" style="left:1218.11px;top:436px;font-size:17px;font-weight:700;color:#333">B</span>
<span class="t" style="left:1241.07px;top:436px;font-size:17.6px;font-weight:700;font-style:italic;font-family:'Liberation Serif',serif;color:#333">I</span>
<span class="t" style="left:1262px;top:437px;font-size:14.6px;font-weight:700;color:#333">U</span>
<div style="left:1262px;top:450.6px;width:11.4px;height:1.5px;background:#333"></div>
<span class="t" style="left:1284.39px;top:437px;font-size:16px;font-weight:700;color:#333">S</span>
<div style="left:1283.2px;top:444.4px;width:12.8px;height:1.4px;background:#333"></div>
<span class="t" style="left:1305.01px;top:436px;font-size:15.4px;font-weight:700;color:#333">x</span>
<span class="t" style="left:1314.64px;top:447px;font-size:6.6px;font-weight:700;color:#333">2</span>
<span class="t" style="left:1326.52px;top:437px;font-size:15.4px;font-weight:700;color:#333">x</span>
<span class="t" style="left:1336.02px;top:438px;font-size:6.6px;font-weight:700;color:#333">2</span>
<svg class="i" style="left:1353px;top:439px" width="15" height="13" viewBox="1353 439 15 13"><path d="M1354.0 440.5h7.4M1354.0 443.6h12.2M1354.0 446.8h8.6M1354.0 449.9h12.6" stroke="#222" stroke-width="2" fill="none"/></svg>
<svg class="i" style="left:1375px;top:439px" width="15" height="13" viewBox="1375 439 15 13"><path d="M1377.8 440.5h9M1376.0 443.6h12.6M1377.8 446.8h9M1376.0 449.9h12.6" stroke="#222" stroke-width="2" fill="none"/></svg>
<svg class="i" style="left:1398px;top:439px" width="15" height="13" viewBox="1398 439 15 13"><path d="M1403.9 440.5h7.2M1398.7 443.6h12.4M1401.5 446.8h9.6M1398.7 449.9h12.4" stroke="#222" stroke-width="2" fill="none"/></svg>
<svg class="i" style="left:1419px;top:439px" width="15" height="13" viewBox="1419 439 15 13"><path d="M1420.2 440.5h12.6M1420.2 443.6h12.6M1420.2 446.8h12.6M1420.2 449.9h12.6" stroke="#222" stroke-width="2" fill="none"/></svg>
<svg class="i" style="left:1446px;top:438px" width="16" height="14" viewBox="1446 438 16 14"><circle cx="1449.2" cy="441.5" r="2" fill="#333"/><circle cx="1449.2" cy="448.7" r="2" fill="#333"/><path d="M1453.6 440.4h6.4M1453.6 442.6h6.4M1453.6 447.6h6.4M1453.6 449.8h6.4" stroke="#666" stroke-width="1.1" fill="none"/></svg>
<span class="t" style="left:1469.23px;top:439px;font-size:7.4px;font-weight:700;color:#333">1</span>
<span class="t" style="left:1469.44px;top:446px;font-size:7.4px;font-weight:700;color:#333">2</span>
<svg class="i" style="left:1474px;top:438px" width="10" height="14" viewBox="1474 438 10 14"><path d="M1475.2 440.4h6.6M1475.2 442.6h6.6M1475.2 447.6h6.6M1475.2 449.8h6.6" stroke="#666" stroke-width="1.1" fill="none"/></svg>
<svg class="i" style="left:1490px;top:437px" width="16" height="16" viewBox="1490 437 16 16"><path d="M1497.4 438.4V451.6" stroke="#c4c4c4" stroke-width="1.3" fill="none"/><path d="M1499.4 440.6h5M1499.4 442.8h4M1499.4 445h5M1499.4 447.2h4M1499.4 449.4h5M1493 440.6h2.6M1493 449.4h2.6" stroke="#d2d2d2" stroke-width="1" fill="none"/><path d="M1491 445L1493.4 443.2V444.4H1496V445.6H1493.4V446.8Z" fill="#c8c8c8"/></svg>
<svg class="i" style="left:1512px;top:437px" width="17" height="16" viewBox="1512 437 17 16"><path d="M1519.4 438.4V451.6" stroke="#333" stroke-width="1.3" fill="none"/><path d="M1521.6 440.6h5.6M1521.6 442.8h4.4M1521.6 445h5.6M1521.6 447.2h4.4M1521.6 449.4h5.6" stroke="#444" stroke-width="1.1" fill="none"/><path d="M1515.4 440.6h2M1515.4 449.4h2" stroke="#888" stroke-width="1" fill="none"/><path d="M1517.8 445L1515.4 443.2V444.4H1513V445.6H1515.4V446.8Z" fill="#222"/></svg>
<svg class="i" style="left:1538px;top:439px" width="17" height="10" viewBox="1538 439 17 10"><g fill="none" stroke="#444" stroke-width="1.7"><rect x="1540.2" y="441" width="8.4" height="6.2" rx="3.1"/><rect x="1544.6" y="441" width="8.4" height="6.2" rx="3.1"/></g><path d="M1543.4 444.1H1550" stroke="#333" stroke-width="1.6"/></svg>
<svg class="i" style="left:1561px;top:437px" width="16" height="14" viewBox="1561 437 16 14"><path fill="none" stroke="#333" stroke-width="1.2" d="M1562.8 438.7H1575.7V450H1562.8Z"/><path fill="#333" d="M1563.6 449.4V447L1566.6 444L1569 446.4L1572 443.2L1575 446.2V449.4Z"/><circle cx="1565.8" cy="441.4" r="1.1" fill="#333"/></svg>
<svg class="i" style="left:1583px;top:436px" width="16" height="17" viewBox="1583 436 16 17"><path d="M1585.2 437.2h11.6M1585.2 439.2h11.6M1585.2 441.2h11.6M1585.2 448h11.6M1585.2 450h11.6M1585.2 452h11.6" stroke="#bdbdbd" stroke-width="1.2" fill="none"/><path d="M1584 444.5h14" stroke="#111" stroke-width="1.6" fill="none"/></svg>
<span class="t" style="left:1606.22px;top:436px;font-size:18.4px;font-weight:700;color:#333">Ω</span>
<svg class="i" style="left:1627px;top:436px" width="17" height="17" viewBox="1627 436 17 17"><circle cx="1635.3" cy="444.6" r="6.6" fill="none" stroke="#333" stroke-width="1.3"/><circle cx="1633" cy="442.8" r="1.1" fill="#333"/><circle cx="1637.6" cy="442.8" r="1.1" fill="#333"/><path d="M1632 446.6Q1635.3 450 1638.6 446.6" fill="none" stroke="#333" stroke-width="1.2"/></svg>
<svg class="i" style="left:1651px;top:436px" width="14" height="17" viewBox="1651 436 14 17"><path fill="none" stroke="#333" stroke-width="1.4" d="M1652.6 437.8H1659.2L1662.6 441.2V450.8H1652.6Z"/><path d="M1656.4 443.6L1654.6 445.8L1656.4 448M1658.8 443.6L1660.6 445.8L1658.8 448" fill="none" stroke="#333" stroke-width="1.1"/></svg>
<span class="t" style="left:937.94px;top:438px;font-size:12.2px;color:#333;letter-spacing:-0.090px">Schriftart</span>
<svg class="i" style="left:1005.4px;top:444.4px" width="4.4" height="2.3" viewBox="0 0 10 5"><path d="M0 0H10L5 5Z" fill="#444"/></svg>
<span class="t" style="left:1032.5px;top:438px;font-size:12.2px;color:#333;letter-spacing:0.191px">Größe</span>
<svg class="i" style="left:1074.2px;top:444.4px" width="4.4" height="2.3" viewBox="0 0 10 5"><path d="M0 0H10L5 5Z" fill="#444"/></svg>
<div class="gl"></div><div class="gr"></div><div class="dv" style="left:947.3px"></div><div class="dv" style="left:1570px"></div>
<div class="sb"></div><div class="st"></div>
<svg class="i" style="left:1695px;top:464px" width="8" height="6" viewBox="1695 464 8 6"><path d="M1695.6 469.2L1698.6 465.4L1701.6 469.2Z" fill="#505050"/></svg>
<svg class="i" style="left:1695px;top:956px" width="8" height="6" viewBox="1695 956 8 6"><path d="M1695.6 957.2L1698.6 961L1701.6 957.2Z" fill="#505050"/></svg>
<p class="t" style="left:957.91px;top:463px;font-size:13px;font-weight:700;color:#444;transform:scaleX(1.0886)">Sehr geehrte Damen und Herren,</p>
<p class="t" style="left:958.36px;top:503px;font-size:14.1px;color:#555">Sie haben sich für das richtige Produkt zur effektiven Arbeitsweise entscheiden. Vielen Dank für</p>
<p class="t" style="left:958.07px;top:523px;font-size:14.1px;color:#555;letter-spacing:0.005px">Ihre Bestellung und das entgegengebrachte Vertrauen. Gerne übermitteln wir Ihnen Ihre</p>
<p class="t" style="left:958.16px;top:543px;font-size:14.1px;color:#555">persönlichen Zugänge zu Ihrem Surfaktiv System und die benötigten weiteren Zugangsdaten für</p>
<p class="t" style="left:958.48px;top:563px;font-size:14.1px;color:#555">eine entsprechende Kommunikation mit uns.</p>
<p class="t" style="left:958.05px;top:604px;font-size:14.1px;color:#555;letter-spacing:0.008px">Bei Fragen stehen wir Ihnen natürlich gerne zur Verfügung.</p>
<h2 class="t" style="left:957.95px;top:658px;font-size:16.5px;color:#ee7f22;font-weight:400">Ihnen werden folgende Produkte bereitgestellt</h2>
<div class="tb"></div>
<div class="c s" style="left:964.3px;top:700.2px;width:185.4px"></div><div class="c s" style="left:1154.4px;top:700.2px;width:399.8px"></div>
<label class="t" style="left:975.09px;top:715px;font-size:12.08px;color:#555">Vertragsnummer:</label>
<span class="t" style="left:1165.79px;top:715px;font-size:12.08px;font-weight:700;color:#444">xxxxx</span>
<div class="c" style="left:964.3px;top:746.9px;width:185.4px"></div><div class="c" style="left:1154.4px;top:746.9px;width:399.8px"></div>
<label class="t" style="left:974.24px;top:762px;font-size:12.08px;color:#555">Produkt:</label>
<span class="t" style="left:1166.13px;top:762px;font-size:12.08px;font-weight:700;color:#444">TB-PRODUKTLISTE: ??,00 € monatlich</span>
<div class="c s" style="left:964.3px;top:793.5px;width:185.4px"></div><div class="c s" style="left:1154.4px;top:793.5px;width:399.8px"></div>
<label class="t" style="left:974.24px;top:809px;font-size:12.08px;color:#555">Leistungsinhalt:</label>
<span class="t" style="left:1165.8px;top:809px;font-size:12.08px;font-weight:700;color:#444">X Nutzer + Modul: ???</span>
<div class="c" style="left:964.3px;top:840.2px;width:185.4px"></div><div class="c" style="left:1154.4px;top:840.2px;width:399.8px"></div>
<label class="t" style="left:975.09px;top:855px;font-size:12.08px;color:#555">Vertragsbeginn:</label>
<span class="t" style="left:1165.43px;top:855px;font-size:12.08px;font-weight:700;color:#444">DATUM</span>
<div class="c s" style="left:964.3px;top:886.8px;width:185.4px"></div><div class="c s" style="left:1154.4px;top:886.8px;width:399.8px"></div>
<label class="t" style="left:975.09px;top:902px;font-size:12.08px;color:#555">Vertragslaufzeit:</label>
<span class="t" style="left:1165.8px;top:902px;font-size:12.08px;font-weight:700;color:#444">XX Monate</span>
<svg class="i" style="left:1159.4px;top:556.6px" width="57.2" height="5" viewBox="1159.4 556.6 57.2 5"><path d="M1160.4 558.0L1162.5 559.8L1164.6 557.8L1166.7 559.8L1168.8 557.8L1170.9 559.8L1173.0 557.8L1175.1 559.8L1177.2 557.8L1179.3 559.8L1181.4 557.8L1183.5 559.8L1185.6 557.8L1187.7 559.8L1189.8 557.8L1191.9 559.8L1194.0 557.8L1196.1 559.8L1198.2 557.8L1200.3 559.8L1202.4 557.8L1204.5 559.8L1206.6 557.8L1208.7 559.8L1210.8 557.8L1212.9 559.8L1215.0 557.8L1215.6 559.8" fill="none" stroke="#f0452f" stroke-width="1.15" stroke-linejoin="round"/></svg>
<svg class="i" style="left:1164.6px;top:726.6px" width="36" height="5" viewBox="1164.6 726.6 36 5"><path d="M1165.6 728.0L1167.7 729.8L1169.8 727.8L1171.9 729.8L1174.0 727.8L1176.1 729.8L1178.2 727.8L1180.3 729.8L1182.4 727.8L1184.5 729.8L1186.6 727.8L1188.7 729.8L1190.8 727.8L1192.9 729.8L1195.0 727.8L1197.1 729.8L1199.2 727.8L1199.6 729.8" fill="none" stroke="#f0452f" stroke-width="1.15" stroke-linejoin="round"/></svg>
<svg class="i" style="left:1164.6px;top:820px" width="11" height="5" viewBox="1164.6 820 11 5"><path d="M1165.6 821.4L1167.7 823.2L1169.8 821.2L1171.9 823.2L1174.0 821.2L1174.6 823.2" fill="none" stroke="#f0452f" stroke-width="1.15" stroke-linejoin="round"/></svg>
<svg class="i" style="left:1164.6px;top:913.3px" width="19" height="5" viewBox="1164.6 913.3 19 5"><path d="M1165.6 914.7L1167.7 916.5L1169.8 914.5L1171.9 916.5L1174.0 914.5L1176.1 916.5L1178.2 914.5L1180.3 916.5L1182.4 914.5L1182.6 916.5" fill="none" stroke="#f0452f" stroke-width="1.15" stroke-linejoin="round"/></svg>
<div class="wl" style="top:965.8px;height:4.2px"></div><div class="wf"></div>
<div class="fb pri" style="left:833.8px;top:973.2px;width:147.4px;height:21px;"></div>
<a class="t" style="left:840.3px;top:978px;font-size:12px;color:#fff;letter-spacing:0.015px">Speichern und Schließen</a>
<div class="fb" style="left:985px;top:973px;width:67.4px;height:21px;"></div>
<a class="t" style="left:990.8px;top:978px;font-size:12px;color:#333;letter-spacing:0.081px">Speichern</a>
<div class="fb" style="left:1055.6px;top:973px;width:73.4px;height:21px;"></div>
<a class="t" style="left:1062.65px;top:978px;font-size:12px;color:#333;letter-spacing:0.166px">Abbrechen</a>
<label class="t" style="left:1462.49px;top:978px;font-size:12px;color:#222;letter-spacing:0.012px">Zeichensatz:</label>
<div class="fb" style="left:1533.6px;top:973.4px;width:159px;height:20.4px;"></div>
<span class="t" style="left:1540.2px;top:978px;font-size:12px;color:#333;letter-spacing:0.597px">utf-8</span>
<svg class="i" style="left:1679px;top:982.4px" width="6.8" height="3.4" viewBox="0 0 10 5"><path d="M0 0H10L5 5Z" fill="#333"/></svg>
</section>
<div class="hs"></div><div class="hst"></div><div class="bl"></div>
<svg class="i" style="left:318.9px;top:1068px" width="4.3" height="7" viewBox="0 0 5 8"><path d="M5 0L0 4L5 8Z" fill="#a3a3a3"/></svg>
<svg class="i" style="left:1911.4px;top:1068px" width="4.3" height="7" viewBox="0 0 5 8"><path d="M0 0L5 4L0 8Z" fill="#505050"/></svg>
</main>
</body>
</html>
